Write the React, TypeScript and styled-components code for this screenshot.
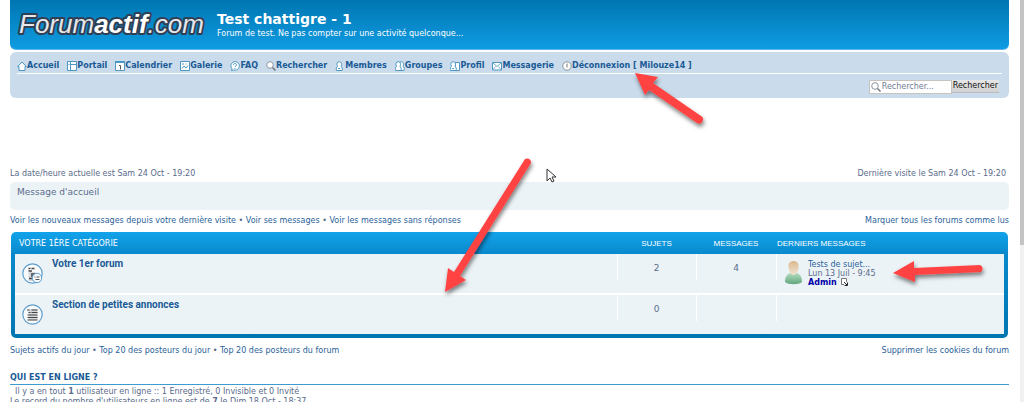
import React from "react";
import styled, { createGlobalStyle } from "styled-components";

const Global = createGlobalStyle`
  *, *::before, *::after { box-sizing: border-box; }
  html { height: 100%; overflow: hidden; }
  body {
    margin: 0;
    height: 100%;
    overflow: hidden;
    background: #fff;
    color: #5a6b8a;
    font-family: Verdana, "DejaVu Sans", sans-serif;
    font-size: 8px;
    line-height: 10px;
  }
  #root { height: 100%; }
  h1, h2, p { margin: 0; padding: 0; }
`;

const Screen = styled.div`
  display: flex;
  align-items: flex-start;
  height: 100%;
  overflow: hidden;
`;

const Page = styled.div`
  position: relative;
  flex: 1;
  min-width: 0;
  padding: 0 11px 0 10px;
`;

const ScrollTrack = styled.div`
  width: 4px;
  height: 100%;
  background: #f1f1f1;
`;

const ScrollThumb = styled.div`
  height: 61%;
  background: #c4c4c4;
`;

const Header = styled.header`
  display: flex;
  align-items: flex-start;
  gap: 13px;
  height: 50px;
  padding: 10px 6px 0;
  border-bottom: 1px solid #55b4ea;
  border-radius: 0 0 6px 6px;
  background: linear-gradient(#0076b1, #0f9be2);
  color: #fff;
`;

const Logo = styled.svg`
  display: block;
  width: 188px;
  height: 30px;
  overflow: visible;
`;

const SiteTitle = styled.h1`
  font-size: 14px;
  line-height: 18px;
`;

const Tagline = styled.p`
  font-size: 8px;
  line-height: 12px;
`;

const NavPanel = styled.div`
  margin-top: 2px;
  height: 46px;
  padding: 6px 7px 0;
  border-radius: 6px;
  background: #cadceb;
`;

const Nav = styled.nav`
  display: flex;
  gap: 8px;
  height: 16px;
  border-bottom: 1px solid #fff;
`;

const NavLink = styled.a`
  display: flex;
  align-items: center;
  color: #1a5a96;
  font-size: 8px;
  font-weight: bold;
  line-height: 14px;
  text-decoration: none;
  white-space: nowrap;
`;

const NavIcon = styled.svg`
  display: block;
  flex: none;
  width: 10px;
  height: 10px;
  fill: #fff;
  stroke: #4d97c4;
  stroke-width: 1;
`;

const SearchForm = styled.form`
  display: flex;
  justify-content: flex-end;
  padding: 6px 3px 0 0;
`;

const SearchField = styled.label`
  display: flex;
  align-items: center;
  width: 83px;
  height: 14px;
  padding-left: 1px;
  border: 1px solid #c7c3bf;
  background: #fff;
`;

const SearchInput = styled.input`
  flex: 1;
  min-width: 0;
  height: 12px;
  padding: 0 0 0 1px;
  border: 0;
  outline: 0;
  background: transparent;
  color: #536482;
  font: 8px/12px Verdana, "DejaVu Sans", sans-serif;
  &::placeholder { color: #6f7d95; opacity: 1; }
`;

const SearchButton = styled.button`
  height: 13px;
  padding: 0 1px;
  border: 0;
  border-bottom: 1px solid #b5bcc2;
  background: linear-gradient(#e6e6e6, #d2d2d2);
  color: #111;
  font: 8px/12px Verdana, "DejaVu Sans", sans-serif;
`;

const Bar = styled.div<{ $top: number; $inset?: boolean }>`
  display: flex;
  justify-content: space-between;
  margin-top: ${(p) => p.$top}px;
  padding-right: ${(p) => (p.$inset ? 3 : 0)}px;
  font-size: 8px;
  line-height: 12px;
`;

const Link = styled.a`
  color: #2a6299;
  text-decoration: none;
`;

const Welcome = styled.p`
  && { margin-top: 2px; padding: 4px 7px 0; }
  height: 28px;
  border-radius: 5px;
  background: #ecf3f7;
  font-size: 9px;
  line-height: 12px;
`;

const Category = styled.section`
  margin: 5px 1px 0;
  padding: 0 4px 4px;
  border-radius: 5px;
  background: linear-gradient(#12a3eb 0, #0989cc 22px, #0076b1 100%);
`;

const ForumTable = styled.table`
  width: 100%;
  border-collapse: collapse;
  table-layout: fixed;
`;

const HeadCell = styled.th<{ $width?: number; $align?: "left" | "center"; $verdana?: boolean }>`
  width: ${(p) => (p.$width ? p.$width + "px" : "auto")};
  height: 22px;
  padding: 1px 0 0 ${(p) => (p.$verdana ? 4 : p.$align === "left" ? 1 : 0)}px;
  color: #fff;
  font: 8px/12px "Liberation Sans", Arial, sans-serif;
  ${(p) => p.$verdana && 'font-family: Verdana, "DejaVu Sans", sans-serif;'}
  text-align: ${(p) => p.$align ?? "center"};
  text-transform: uppercase;
`;

const Row = styled.tr`
  background: #ecf3f7;
  & + & { border-top: 2px solid #fff; }
`;

const Cell = styled.td<{ $divided?: boolean }>`
  height: 40px;
  padding: 0;
  vertical-align: top;
  text-align: center;
  font-size: 9px;
  line-height: 12px;
  ${(p) =>
    p.$divided &&
    "background: linear-gradient(#fff, #fff) 0 0 / 1px 26px no-repeat;"}
`;

const CellText = styled.div`
  padding-top: 8px;
`;

const ForumInfo = styled.div`
  display: flex;
  gap: 9px;
  padding: 4px 0 0 7px;
`;

const ForumIcon = styled.svg`
  display: block;
  margin-top: 5px;
  width: 21px;
  height: 21px;
  flex: none;
`;

const ForumLink = styled.a`
  color: #1a5a96;
  font: bold 10px/12px Roboto, Arial, sans-serif;
  text-decoration: none;
`;

const LastPost = styled.div`
  display: flex;
  gap: 5px;
  padding: 6px 0 0 8px;
  text-align: left;
  font-size: 8px;
  line-height: 9px;
`;

const Avatar = styled.svg`
  display: block;
  width: 19px;
  height: 26px;
`;

const UserLink = styled.a`
  color: #0000a8;
  font-weight: bold;
  text-decoration: none;
`;

const PostIcon = styled.svg`
  width: 7px;
  height: 8px;
  margin-left: 2px;
  vertical-align: -1px;
`;

const OnlineTitle = styled.h2`
  && { margin: 15px 0 2px; }
  border-bottom: 1px solid #3d9bd0;
  color: #1a5a96;
  font-size: 8px;
  line-height: 12px;
  text-transform: uppercase;
`;

const OnlineText = styled.p`
  font-size: 8px;
  line-height: 10px;
`;

const Annotations = styled.svg`
  position: absolute;
  inset: 0 auto auto 0;
  width: 1024px;
  height: 402px;
  pointer-events: none;
`;

type IconName =
  | "home" | "portal" | "calendar" | "gallery" | "faq" | "search"
  | "member" | "group" | "profile" | "mail" | "power";

const person = "M1.500 9.500c-.8-2 0-3.500 1-4C1.200 3 2 .7 4.200.7S7.200 3 6 5.500c1 .5 1.800 2 1 4Z";

const icons: Record<IconName, React.ReactNode> = {
  home: <path d="M.7 5.500 5 1 9.300 5.500H8V9.500H2V5.500Z" />,
  portal: <><path d="M.5.5h9v9h-9z" /><path d="M3.500.5v9M3.500 3.500h6M1.500 3.500h1" /></>,
  calendar: <><path d="M.5.5h9v9h-9z" /><path d="M0 1h10" strokeWidth="2" /><path d="M4 4.500h1.500V8.500" stroke="#555" fill="none" /></>,
  gallery: <><path d="M.5.5h9v9h-9z" /><path d="m2 7.500 2-2.500 2 2 2-2.500M2 3h2M5.500 3h1" fill="none" /></>,
  faq: <><path d="M5 .6a4.300 4.300 0 1 1-1.500 8.300L1.500 9.500 2 7.800A4.300 4.300 0 0 1 5 .6Z" /><path d="M3.500 4c0-2 3-2 3 0C6.500 5 5 5 5 6M5 7v1" fill="none" /></>,
  search: <><circle cx="4" cy="4" r="3.300" stroke="#8b98a3" /><path d="m6.500 6.500 3 3" stroke="#777" strokeWidth="1.500" /></>,
  member: <><path d={person} /><path d="M3 7.500h2" /></>,
  group: <><path d={person} transform="translate(2)" /><path d={person} transform="translate(-1)" /></>,
  profile: <><path d="M5.500 1.500h4v8h-4z" /><path d={person} transform="translate(-1)" /><path d="M2 7.500h2" /></>,
  mail: <><path d="M.5 1.500h9v7.500h-9z" /><path d="m1 2 4 3.500L9 2M1 8.500l2.700-3M9 8.500l-2.700-3" fill="none" strokeWidth=".8" /></>,
  power: <><circle cx="5" cy="5" r="4.200" stroke="#8a949c" /><path d="M5 2.500V6.500" stroke="#777" /></>,
};

const Icon = ({ name }: { name: IconName }) => (
  <NavIcon viewBox="0 0 10 10" aria-hidden="true">{icons[name]}</NavIcon>
);

const navItems: [IconName, string][] = [
  ["home", "Accueil"], ["portal", "Portail"], ["calendar", "Calendrier"],
  ["gallery", "Galerie"], ["faq", "FAQ"], ["search", "Rechercher"],
  ["member", "Membres"], ["group", "Groupes"], ["profile", "Profil"],
  ["mail", "Messagerie"], ["power", "Déconnexion [ Milouze14 ]"],
];

const Topic = ({ nested }: { nested?: boolean }) => (
  <ForumIcon viewBox="0 0 21 21" aria-hidden="true">
    <circle cx="10.500" cy="10.500" r="9.700" fill="#f8fafc" stroke="#5c9dcc" strokeWidth="1.200" />
    {nested ? (
      <>
        <path d="M6.500 9h7v9h-7z" fill="#d5d8dc" />
        <path d="M6.500 5.500h2M9.500 5.500h3M6.500 8h3.500M9 11h4M9 13h3M7 15.500h3" stroke="#444" strokeWidth="1.300" />
        <circle cx="15" cy="15" r="4.700" fill="#f8fafc" stroke="#5c9dcc" />
        <path d="M12.500 14h1M14.500 14h3M13.500 16.500h4" stroke="#555" />
      </>
    ) : (
      <>
        <path d="M6.500 5h9v11h-9z" fill="#d5d8dc" />
        <path d="M5 6h2.500M9.500 6h6M6.500 8.500h2M9.500 8.500h6M5.500 11h10M5.500 13.500h10M5.500 16h10" stroke="#444" strokeWidth="1.200" />
      </>
    )}
  </ForumIcon>
);

export default function App() {
  return (
    <Screen>
      <Global />
      <Page>
        <Header>
          <Logo viewBox="0 0 188 30" role="img" aria-label="Forumactif.com">
            <text x="3" y="23" fontFamily="Liberation Sans, Arial, sans-serif" fontSize="26" fontStyle="italic" fill="#e6e8ec" stroke="#2f3f54" strokeWidth="4" strokeLinejoin="round" paintOrder="stroke">
              Forum<tspan fontWeight="bold" fill="#fff">actif</tspan>.com
            </text>
          </Logo>
          <div>
            <SiteTitle>Test chattigre - 1</SiteTitle>
            <Tagline>Forum de test. Ne pas compter sur une activité quelconque...</Tagline>
          </div>
        </Header>
        <NavPanel>
          <Nav>
            {navItems.map(([icon, label]) => (
              <NavLink href="#" key={label}><Icon name={icon} />{label}</NavLink>
            ))}
          </Nav>
          <SearchForm>
            <SearchField>
              <Icon name="search" />
              <SearchInput aria-label="Rechercher" placeholder="Rechercher..." />
            </SearchField>
            <SearchButton type="button">Rechercher</SearchButton>
          </SearchForm>
        </NavPanel>
        <Bar $top={70} $inset>
          <span>La date/heure actuelle est Sam 24 Oct - 19:20</span>
          <span>Dernière visite le Sam 24 Oct - 19:20</span>
        </Bar>
        <Welcome>Message d'accueil</Welcome>
        <Bar $top={5}>
          <span>
            <Link href="#">Voir les nouveaux messages depuis votre dernière visite</Link> • <Link href="#">Voir ses messages</Link> • <Link href="#">Voir les messages sans réponses</Link>
          </span>
          <Link href="#">Marquer tous les forums comme lus</Link>
        </Bar>
        <Category>
          <ForumTable>
            <thead>
              <tr>
                <HeadCell $align="left" $verdana>Votre 1ère catégorie</HeadCell>
                <HeadCell $width={79}>Sujets</HeadCell>
                <HeadCell $width={80}>Messages</HeadCell>
                <HeadCell $width={228} $align="left">Derniers messages</HeadCell>
              </tr>
            </thead>
            <tbody>
              <Row>
                <Cell><ForumInfo><Topic nested /><ForumLink href="#">Votre 1er forum</ForumLink></ForumInfo></Cell>
                <Cell $divided><CellText>2</CellText></Cell>
                <Cell $divided><CellText>4</CellText></Cell>
                <Cell $divided>
                  <LastPost>
                    <Avatar viewBox="0 0 19 26" aria-hidden="true">
                      <defs>
                        <linearGradient id="body" x1="0" y1="0" x2="0" y2="1">
                          <stop offset="0" stopColor="#b5dcc0" />
                          <stop offset="1" stopColor="#5fa67c" />
                        </linearGradient>
                        <linearGradient id="head" x1="0" y1="0" x2="0" y2="1">
                          <stop offset="0" stopColor="#dcb98f" />
                          <stop offset="1" stopColor="#f0e3d0" />
                        </linearGradient>
                      </defs>
                      <path d="M1 22c0-5 2-8 5-9h7c3 1 5 4 5 9-3 3-14 3-17 0Z" fill="url(#body)" />
                      <path d="M9.500 1c3.500 0 5.500 2.500 5 6-.3 4-2.500 8-5 8s-4.700-4-5-8C4 3.500 6 1 9.500 1Z" fill="url(#head)" />
                    </Avatar>
                    <div>
                      <Link href="#">Tests de sujet...</Link><br />
                      Lun 13 Juil - 9:45<br />
                      <UserLink href="#">Admin</UserLink>{" "}
                      <PostIcon viewBox="0 0 7 8" aria-hidden="true"><path d="M3 6.500H.5v-6h5V4" fill="#fff" stroke="#777" /><path d="m3 4 3 3M6.500 4.500v3h-3" fill="none" stroke="#222" /></PostIcon>
                    </div>
                  </LastPost>
                </Cell>
              </Row>
              <Row>
                <Cell><ForumInfo><Topic /><ForumLink href="#">Section de petites annonces</ForumLink></ForumInfo></Cell>
                <Cell $divided><CellText>0</CellText></Cell>
                <Cell $divided />
                <Cell $divided />
              </Row>
            </tbody>
          </ForumTable>
        </Category>
        <Bar $top={7}>
          <span>
            <Link href="#">Sujets actifs du jour</Link> • <Link href="#">Top 20 des posteurs du jour</Link> • <Link href="#">Top 20 des posteurs du forum</Link>
          </span>
          <Link href="#">Supprimer les cookies du forum</Link>
        </Bar>
        <OnlineTitle>Qui est en ligne ?</OnlineTitle>
        <OnlineText>&nbsp; Il y a en tout <b>1</b> utilisateur en ligne :: 1 Enregistré, 0 Invisible et 0 Invité</OnlineText>
        <OnlineText>Le record du nombre d'utilisateurs en ligne est de <b>7</b> le Dim 18 Oct - 18:37</OnlineText>
        <Annotations viewBox="0 0 1024 402" aria-hidden="true">
          <defs>
            <filter id="shadow" x="-20%" y="-60%" width="140%" height="240%">
              <feDropShadow dx="1" dy="3" stdDeviation="2" floodColor="#000" floodOpacity=".5" />
            </filter>
          </defs>
          <g fill="#ff4343" stroke="none">
            <g filter="url(#shadow)"><path d="M635 73 658 77 653 83 701 116A4 4 0 0 1 697 123L649 90 645 95Z" /></g>
            <g filter="url(#shadow)"><path d="M445 292 448 268 454 272 525 159A4 4 0 0 1 531 163L460 276 466 280Z" /></g>
            <g filter="url(#shadow)"><path d="M893 273 914 261V268L980 265A4 4 0 0 1 981 272L915 275V282Z" /></g>
          </g>
          <path d="M547 169v12l3-3 2 4 2-1-2-4h4Z" fill="#fff" stroke="#333" />
        </Annotations>
      </Page>
      <ScrollTrack><ScrollThumb /></ScrollTrack>
    </Screen>
  );
}
